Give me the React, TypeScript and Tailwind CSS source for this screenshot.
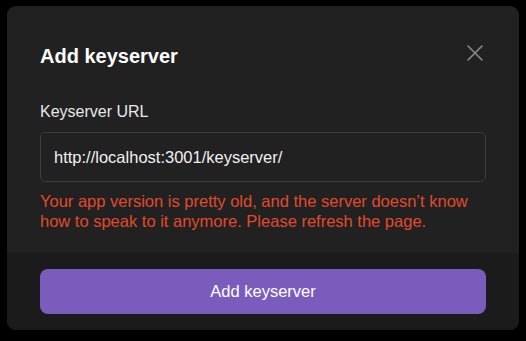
import React from 'react';

const CloseIcon: React.FC = () => (
  <svg width="18" height="18" viewBox="0 0 18 18" fill="none" stroke="#8a8a8a" strokeWidth="1.6" strokeLinecap="round">
    <path d="M2 2L16 16M16 2L2 16" />
  </svg>
);

const App: React.FC = () => {
  return (
    <div className="w-[526px] h-[341px] bg-black pt-[6px] pl-[7px] font-['Liberation_Sans',Arial,sans-serif]">
      <div className="w-[512px] h-[324px] bg-[#212121] rounded-[9px] overflow-hidden flex flex-col">
        <div className="px-[33px] pt-[38px] pb-[22px]">
          <div className="flex items-center justify-between">
            <h2 className="text-[20px] leading-[24px] font-bold text-white">Add keyserver</h2>
            <button className="mr-[2px] -mt-[6px]">
              <CloseIcon />
            </button>
          </div>

          <label className="block mt-[34px] text-[16px] leading-[20px] text-[#e8e8e8]">Keyserver URL</label>
          <div className="mt-[10px] h-[50px] border border-[#3d3d3d] rounded-[5px] flex items-center px-[13px]">
            <span className="text-[16.5px] text-[#f0f0f0]">http://localhost:3001/keyserver/</span>
          </div>

          <p className="mt-[9px] text-[16.5px] leading-[20px] text-[#e2492c]">
            Your app version is pretty old, and the server doesn’t know how to speak to it anymore. Please refresh the page.
          </p>
        </div>

        <div className="flex-1 bg-[#1b1b1b] px-[33px] pt-[16px]">
          <button className="w-full h-[45px] rounded-[8px] bg-[#7a5cbd] text-white text-[16.5px]">Add keyserver</button>
        </div>
      </div>
    </div>
  );
};

export default App;
